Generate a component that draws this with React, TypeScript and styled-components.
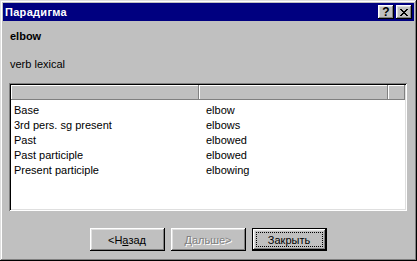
import React from 'react';
import styled, { createGlobalStyle } from 'styled-components';

const GlobalStyle = createGlobalStyle`
  html, body {
    margin: 0;
    padding: 0;
    background: #c0c0c0;
  }
  body {
    font-family: "Liberation Sans", Arial, sans-serif;
    font-size: 11px;
    color: #000;
  }
`;

const Window = styled.div`
  width: 417px;
  height: 261px;
  box-sizing: border-box;
  padding: 3px;
  background: #c0c0c0;
  box-shadow: inset -1px -1px #000, inset 1px 1px #dfdfdf, inset -2px -2px #808080,
    inset 2px 2px #fff;
  display: flex;
  flex-direction: column;
`;

const TitleBar = styled.div`
  height: 18px;
  background: #000080;
  display: flex;
  align-items: center;
  padding: 0 2px;
`;

const TitleText = styled.span`
  flex: 1;
  color: #fff;
  font-weight: bold;
  font-size: 11px;
  line-height: 18px;
  letter-spacing: 0.3px;
`;

const TitleButtons = styled.div`
  display: flex;
  gap: 2px;
`;

const TitleButton = styled.div`
  width: 16px;
  height: 14px;
  background: #c0c0c0;
  box-shadow: inset -1px -1px #000, inset 1px 1px #fff, inset -2px -2px #808080,
    inset 2px 2px #dfdfdf;
  display: flex;
  align-items: center;
  justify-content: center;
  font-weight: bold;
  font-size: 12px;
  line-height: 14px;
  color: #000;
`;

const Body = styled.div`
  flex: 1;
  display: flex;
  flex-direction: column;
  padding: 9px 4px 0 6px;
`;

const Heading = styled.div`
  font-weight: bold;
  line-height: 13px;
  padding-left: 1px;
`;

const Subtitle = styled.div`
  line-height: 13px;
  margin-top: 15px;
  padding-left: 1px;
`;

const ListBox = styled.div`
  margin-top: 12px;
  width: 398px;
  height: 128px;
  box-sizing: border-box;
  padding: 2px;
  background: #fff;
  box-shadow: inset 1px 1px #808080, inset -1px -1px #fff, inset 2px 2px #000,
    inset -2px -2px #dfdfdf;
`;

const Grid = styled.div`
  display: grid;
  grid-template-columns: 188px 189px 17px;
`;

const HeaderCell = styled.div`
  height: 15px;
  background: #c0c0c0;
  box-shadow: inset -1px -1px #808080, inset 1px 1px #fff;
`;

const Rows = styled(Grid)`
  padding-top: 3px;
`;

const Cell = styled.div<{ $pad: number }>`
  line-height: 15px;
  padding-left: ${p => p.$pad}px;
  white-space: nowrap;
`;

const ButtonRow = styled.div`
  display: flex;
  justify-content: center;
  gap: 6px;
  margin-top: 17px;
  margin-left: -3px;
`;

const Button = styled.div<{ $default?: boolean; $disabled?: boolean }>`
  width: 75px;
  height: 23px;
  box-sizing: border-box;
  padding: 4px;
  background: #c0c0c0;
  display: flex;
  align-items: center;
  justify-content: center;
  font-size: 11px;
  color: ${p => (p.$disabled ? '#808080' : '#000')};
  text-shadow: ${p => (p.$disabled ? '1px 1px 0 #fff' : 'none')};
  box-shadow: ${p =>
    p.$default
      ? 'inset 0 0 0 1px #000, inset -2px -2px #000, inset 2px 2px #fff, inset -3px -3px #808080, inset 3px 3px #dfdfdf'
      : 'inset -1px -1px #000, inset 1px 1px #fff, inset -2px -2px #808080, inset 2px 2px #dfdfdf'};
`;

const Focus = styled.span`
  flex: 1;
  align-self: stretch;
  display: flex;
  align-items: center;
  justify-content: center;
  border: 1px dotted #000;
`;

const CloseGlyph = () => (
  <svg width="8" height="7" viewBox="0 0 8 7" shapeRendering="crispEdges">
    <path
      d="M0 0h2v1H0zM6 0h2v1H6zM1 1h2v1H1zM5 1h2v1H5zM2 2h4v1H2zM3 3h2v1H3zM2 4h4v1H2zM1 5h2v1H1zM5 5h2v1H5zM0 6h2v1H0zM6 6h2v1H6z"
      fill="#000"
    />
  </svg>
);

const forms = [
  ['Base', 'elbow'],
  ['3rd pers. sg present', 'elbows'],
  ['Past', 'elbowed'],
  ['Past participle', 'elbowed'],
  ['Present participle', 'elbowing'],
];

export default function App() {
  return (
    <>
      <GlobalStyle />
      <Window>
        <TitleBar>
          <TitleText>Парадигма</TitleText>
          <TitleButtons>
            <TitleButton>?</TitleButton>
            <TitleButton>
              <CloseGlyph />
            </TitleButton>
          </TitleButtons>
        </TitleBar>
        <Body>
          <Heading>elbow</Heading>
          <Subtitle>verb lexical</Subtitle>
          <ListBox>
            <Grid>
              <HeaderCell />
              <HeaderCell />
              <HeaderCell />
            </Grid>
            <Rows>
              {forms.map(([label, value]) => (
                <React.Fragment key={label + value}>
                  <Cell $pad={3}>{label}</Cell>
                  <Cell $pad={7}>{value}</Cell>
                  <Cell $pad={0} />
                </React.Fragment>
              ))}
            </Rows>
          </ListBox>
          <ButtonRow>
            <Button>
              &lt;Н<u>а</u>зад
            </Button>
            <Button $disabled>
              <u>Д</u>альше&gt;
            </Button>
            <Button $default>
              <Focus>Закрыть</Focus>
            </Button>
          </ButtonRow>
        </Body>
      </Window>
    </>
  );
}
